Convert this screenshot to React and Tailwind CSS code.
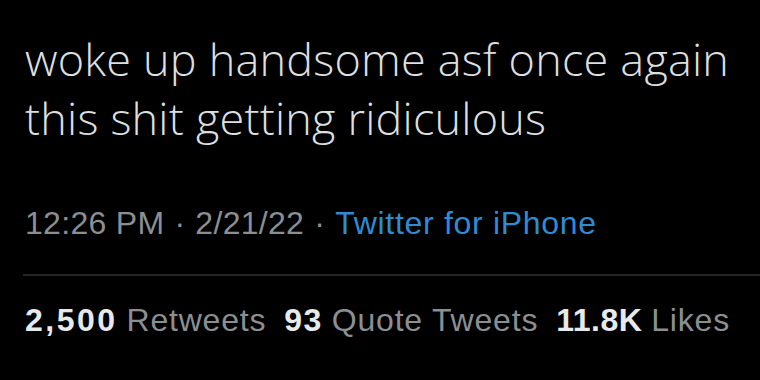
export default function App() {
  return (
    <div className="w-[760px] h-[380px] bg-black overflow-hidden pt-[29px]">
      <p className="pl-[25px] pr-4 text-[45px] leading-[59px] font-light text-[#dcdedf] font-['Open_Sans',sans-serif] tracking-[0.2px]">
        woke up handsome asf once again<br />this shit getting ridiculous
      </p>

      <div className="mt-[58px] pl-[25px] flex items-baseline text-[32px] leading-[36px] tracking-[0.3px] font-['Liberation_Sans',Arial,sans-serif] text-[#8c8f92]">
        <span>12:26 PM</span>
        <span className="mx-[10px]">·</span>
        <span>2/21/22</span>
        <span className="mx-[10px]">·</span>
        <span className="text-[#2d8cd3] tracking-[0.7px]">Twitter for iPhone</span>
      </div>

      <div className="ml-[23px] mt-[33px] border-t-2 border-[#24272a]" />

      <div className="mt-[26px] pl-[25px] flex items-baseline gap-[18px] text-[32px] leading-[36px] font-['Liberation_Sans',Arial,sans-serif]">
        <div>
          <span className="font-bold text-[#e7e9ea] tracking-[2.5px]">2,500</span>{' '}
          <span className="text-[#8c8f92] tracking-[0.8px]">Retweets</span>
        </div>
        <div>
          <span className="font-bold text-[#e7e9ea] tracking-[1.5px]">93</span>{' '}
          <span className="text-[#8c8f92] tracking-[0.8px]">Quote Tweets</span>
        </div>
        <div>
          <span className="font-bold text-[#e7e9ea] tracking-[0.5px]">11.8K</span>{' '}
          <span className="text-[#8c8f92] tracking-[0.8px]">Likes</span>
        </div>
      </div>
    </div>
  );
}
